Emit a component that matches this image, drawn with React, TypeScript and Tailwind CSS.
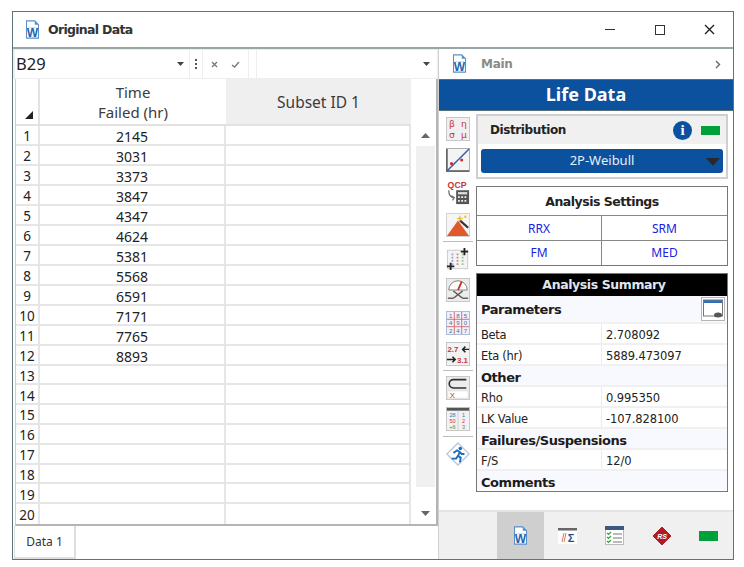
const failures = ["2145", "3031", "3373", "3847", "4347", "4624", "5381", "5568", "6591", "7171", "7765", "8893"];
const rows = Array.from({ length: 20 }, (_, i) => ({ n: i + 1, value: failures[i] ?? "" }));

const DocIcon = ({ size = 20 }: { size?: number }) => (
  <svg width={size} height={size * 1.27} viewBox="0 0 20 25">
    <path d="M2 1h11l5 5v18H2z" fill="#ffffff" stroke="#5b8fc7" strokeWidth="1.4" />
    <path d="M13 1v5h5z" fill="#5b8fc7" />
    <rect x="4" y="9" width="12" height="2" fill="#d5e3f2" />
    <text x="10" y="23" textAnchor="middle" fontSize="16" fontWeight="700" fill="#1f66b0" fontFamily="Liberation Sans, sans-serif">W</text>
  </svg>
);

const IconFrame = ({ children }: { children: React.ReactNode }) => (
  <svg width="24" height="24" viewBox="0 0 26 26" className="block">{children}</svg>
);

const BetaIcon = () => (
  <IconFrame>
    <rect x="0.500" y="0.500" width="25" height="25" fill="#f0f0f0" stroke="#c4c4c4" />
    <g fill="#c8373b" fontSize="10" fontFamily="DejaVu Sans, sans-serif" textAnchor="middle">
      <text x="6.500" y="11">β</text>
      <text x="19.500" y="11">η</text>
      <text x="6.500" y="23">σ</text>
      <text x="19.500" y="23">μ</text>
    </g>
  </IconFrame>
);

const PlotIcon = () => (
  <IconFrame>
    <rect x="0.500" y="0.500" width="25" height="25" fill="#f4f4f4" stroke="#a8a8a8" />
    <path d="M1 1v24h24" fill="none" stroke="#555" strokeWidth="1.6" />
    <path d="M1 25 25 1" stroke="#2f62ad" strokeWidth="1.6" />
    <circle cx="6" cy="17" r="1.700" fill="#d62b2b" />
    <circle cx="17" cy="13" r="1.700" fill="#d62b2b" />
  </IconFrame>
);

const QcpIcon = () => (
  <svg width="24" height="24" viewBox="0 0 26 26" className="block">
    <text x="12" y="8" textAnchor="middle" fontSize="9.500" fontWeight="700" fill="#c8373b" fontFamily="Liberation Sans, sans-serif">QCP</text>
    <path d="M3 10c0 5 2 8 6 8M6 16l3 2-2 3" fill="none" stroke="#5c6b75" strokeWidth="1.300" />
    <rect x="11" y="10" width="14" height="15" fill="#555" />
    <rect x="13" y="12" width="10" height="2.500" fill="#ddd" />
    <path d="M13 16.500h2v2h-2zM16.500 16.500h2v2h-2zM20 16.500h2v2h-2zM13 20.500h2v2h-2zM16.500 20.500h2v2h-2zM20 20.500h2v2h-2z" fill="#eee" />
  </svg>
);

const MountainIcon = () => (
  <IconFrame>
    <rect x="0.500" y="0.500" width="25" height="25" fill="#f5f5f5" stroke="#d0d0d0" />
    <path d="M1 25 13 8l12 17z" fill="#e0592a" />
    <path d="M15 8l9 8" stroke="#333" strokeWidth="2.400" />
    <path d="M15 2l1 3 3 1-3 1-1 3-1-3-3-1 3-1z" fill="#f2c230" />
    <circle cx="21" cy="4" r="1.300" fill="#f2c230" />
  </IconFrame>
);

const GridIcon = () => (
  <IconFrame>
    <rect x="1.500" y="3.500" width="22" height="20" fill="#f4f4f4" stroke="#c9c9c9" />
    <g stroke="#8aa8d6" strokeWidth="2" strokeDasharray="2 1.500">
      <path d="M7 7v14" />
      <path d="M12.500 7v14" stroke="#d08a8a" />
      <path d="M18 7v14" stroke="#9ac49a" />
    </g>
    <path d="M21 1v3h3v2h-3v3h-2V6h-3V4h3V1zM6 17v3h3v2H6v3H4v-3H1v-2h3v-3z" fill="#222" />
  </IconFrame>
);

const GaugeIcon = () => (
  <IconFrame>
    <rect x="0.500" y="0.500" width="25" height="25" fill="#ececec" stroke="#c4c4c4" />
    <path d="M3 13a10 10 0 0 1 20 0z" fill="#fff" stroke="#777" strokeWidth="1" />
    <path d="M13 13l4-9" stroke="#d22" strokeWidth="2" />
    <path d="M8 14l10 8M18 14 8 22" stroke="#555" strokeWidth="1.500" />
    <path d="M2 22h6M18 22h6" stroke="#666" strokeWidth="1.500" />
  </IconFrame>
);

const SudokuIcon = () => (
  <IconFrame>
    <rect x="0.500" y="0.500" width="25" height="25" fill="#eef1f8" stroke="#a9b8d6" />
    <path d="M9 1v24M17 1v24M1 9h24M1 17h24" stroke="#d26a6a" strokeWidth="1" />
    <g fontSize="6.500" textAnchor="middle" fill="#3c6cb4" fontFamily="Liberation Sans, sans-serif">
      <text x="5" y="7.500">1</text><text x="13" y="7.500">8</text><text x="21" y="7.500">5</text>
      <text x="5" y="15.500">4</text><text x="13" y="15.500">9</text><text x="21" y="15.500">0</text>
      <text x="5" y="23.500">2</text><text x="13" y="23.500">4</text><text x="21" y="23.500">7</text>
    </g>
  </IconFrame>
);

const ConvertIcon = () => (
  <IconFrame>
    <rect x="0.500" y="0.500" width="25" height="25" fill="#f2f2f2" stroke="#c4c4c4" />
    <text x="1.500" y="11" fontSize="8.500" fontWeight="700" fill="#c8373b" fontFamily="Liberation Sans, sans-serif">2.7</text>
    <text x="12" y="23" fontSize="8.500" fontWeight="700" fill="#c8373b" fontFamily="Liberation Sans, sans-serif">3.1</text>
    <path d="M25 8h-6M21 5l-3 3 3 3M1 19h8M7 16l3 3-3 3" fill="none" stroke="#222" strokeWidth="1.600" />
  </IconFrame>
);

const SubsetIcon = () => (
  <IconFrame>
    <rect x="0.500" y="0.500" width="25" height="25" fill="#ececec" stroke="#c4c4c4" />
    <path d="M22 4H8a4.500 4.500 0 0 0 0 9h14" fill="none" stroke="#333" strokeWidth="1.800" />
    <rect x="2" y="16" width="22" height="8" fill="#fff" stroke="#ddd" />
    <text x="7" y="23.500" textAnchor="middle" fontSize="8.500" fill="#c8373b" fontFamily="Liberation Sans, sans-serif">X</text>
  </IconFrame>
);

const TableIcon = () => (
  <IconFrame>
    <rect x="0.500" y="0.500" width="25" height="25" fill="#f2f2f2" stroke="#c4c4c4" />
    <rect x="1" y="1" width="24" height="3" fill="#555" />
    <path d="M13 4v21" stroke="#ccc" />
    <g fontSize="6" textAnchor="middle" fontFamily="Liberation Sans, sans-serif">
      <text x="7" y="10.500" fill="#3c6cb4">28</text><text x="19" y="10.500" fill="#3c6cb4">1</text>
      <text x="7" y="17" fill="#c8373b">50</text><text x="19" y="17" fill="#c8373b">2</text>
      <text x="7" y="23.500" fill="#3f9a4a">+6</text><text x="19" y="23.500" fill="#3f9a4a">3</text>
    </g>
  </IconFrame>
);

const RunIcon = () => (
  <IconFrame>
    <path d="M13 1 25 13 13 25 1 13z" fill="#ffffff" stroke="#b6c9de" strokeWidth="1.500" />
    <circle cx="15.500" cy="7" r="1.900" fill="#1b6bb8" />
    <path d="M8 12l4-3 3 2-2 4 3 2-1 5M13 15l-2 3-5 0M15 11l2 2 3 0" fill="none" stroke="#1b6bb8" strokeWidth="2" />
  </IconFrame>
);

const Divider = ({ className }: { className: string }) => <div className={`w-[30px] h-px bg-[#bdbdbd] ${className}`} />;

const SummaryRow = ({ label, value }: { label: string; value: string }) => (
  <div className="flex h-[21px] shrink-0 items-stretch border-b-2 border-[#f0f0f0] text-[11.500px] tracking-[-0.3px] text-[#222]">
    <div className="w-[125px] flex items-center pl-[4px] pt-[5px] border-r border-[#ececec]">{label}</div>
    <div className="flex-1 flex items-center pl-[4px] pt-[5px] tracking-[-0.1px]">{value}</div>
  </div>
);

const SectionRow = ({ label, last }: { label: string; last?: boolean }) => (
  <div className={`flex items-center pl-[4px] pt-[4px] bg-[#f8f8ff] text-[13px] font-bold tracking-[-0.45px] text-[#1c1c1c] ${last ? "h-[19px] shrink-0" : "h-[21px] shrink-0 border-b-2 border-[#f0f0f0]"}`}>{label}</div>
);

export default function App() {
  return (
    <div className="w-[744px] h-[567px] bg-white pt-[11px] pl-[12px] overflow-hidden font-['Noto_Sans',sans-serif]">
      <div className="w-[722px] h-[549px] border border-[#5d7478] flex flex-col bg-white">
        {/* title bar */}
        <div className="h-[37px] shrink-0 flex items-center border-b-2 border-[#9aa5a8]">
          <div className="ml-[12px] mr-[8px] flex"><DocIcon size={15} /></div>
          <span className="pt-[2px] text-[12.500px] font-bold text-[#333] font-['DejaVu_Sans',sans-serif] tracking-[-0.7px]">Original Data</span>
          <div className="ml-auto flex items-center">
            <div className="w-[10px] h-[1.500px] bg-[#333] mr-[40px]" />
            <div className="w-[10px] h-[10px] border border-[#333] mr-[39px]" />
            <svg width="11" height="11" viewBox="0 0 11 11" className="mr-[18px]"><path d="M1 1l9 9M10 1 1 10" stroke="#222" strokeWidth="1.400" /></svg>
          </div>
        </div>

        <div className="flex flex-1 min-h-0">
          {/* data sheet */}
          <div className="w-[425px] shrink-0 flex flex-col">
            <div className="h-[30px] shrink-0 flex items-center pl-[2px] pr-px gap-px bg-[#eeeeee]">
              <div className="w-[174px] h-[28px] bg-white flex items-center pl-px pr-[5px] text-[16.500px] text-[#222]">
                B29
                <svg width="7" height="4" viewBox="0 0 7 4" className="ml-auto"><path d="M0 0h7L3.500 4z" fill="#444" /></svg>
              </div>
              <div className="w-[12px] h-[28px] bg-white flex flex-col items-center justify-center gap-[2px]">
                <div className="w-[2px] h-[2px] bg-[#555]" />
                <div className="w-[2px] h-[2px] bg-[#555]" />
                <div className="w-[2px] h-[2px] bg-[#555]" />
              </div>
              <div className="w-[45px] h-[28px] bg-white flex items-center justify-center gap-[13px]">
                <svg width="7" height="7" viewBox="0 0 7 7"><path d="M1 1l5 5M6 1 1 6" stroke="#777" strokeWidth="1.300" /></svg>
                <svg width="9" height="7" viewBox="0 0 9 7"><path d="M1 4l2.500 2L8 1" fill="none" stroke="#777" strokeWidth="1.300" /></svg>
              </div>
              <div className="w-[7px] h-[28px] bg-white" />
              <div className="flex-1 h-[28px] bg-white flex items-center justify-end pr-[7px]">
                <svg width="7" height="4" viewBox="0 0 7 4"><path d="M0 0h7L3.500 4z" fill="#444" /></svg>
              </div>
            </div>

            <div className="ml-[2px] h-[447px] shrink-0 flex border-r-2 border-b-2 border-[#b5b5b5] border-l border-l-[#cfcfcf]">
              <div className="flex-1 flex flex-col">
                <div className="h-[47px] flex border-b-2 border-[#e2e2e2]">
                  <div className="w-[24px] border-r-2 border-[#e2e2e2] flex items-end justify-end pr-[5px] pb-[5px]">
                    <svg width="8" height="8" viewBox="0 0 8 8"><path d="M8 0v8H0z" fill="#222" /></svg>
                  </div>
                  <div className="w-[186px] pt-[2px] flex flex-col items-center justify-center text-[15px] leading-[20px] text-[#3c3c3c]">
                    <span>Time</span>
                    <span>Failed (hr)</span>
                  </div>
                  <div className="flex-1 pt-[3px] bg-[#efefef] flex items-center justify-center text-[15.500px] text-[#3c3c3c]">Subset ID 1</div>
                </div>
                {rows.map((row) => (
                  <div key={row.n} className="h-[20px] flex border-b-2 border-[#e6e6e6] text-[14px] leading-none text-[#222] last:border-b-0">
                    <div className="w-[24px] pt-[4px] border-r-2 border-[#e6e6e6] flex items-center justify-center text-[13.500px]">{row.n}</div>
                    <div className="w-[186px] pt-[4px] border-r-2 border-[#e6e6e6] flex items-center justify-center">{row.value}</div>
                    <div className="flex-1 border-r-2 border-[#e6e6e6]" />
                  </div>
                ))}
              </div>
              {/* scrollbar */}
              <div className="w-[25px] shrink-0 flex flex-col items-center pt-[54px] pl-[5px] pr-px">
                <svg width="9" height="5" viewBox="0 0 9 5"><path d="M0 5h9L4.500 0z" fill="#666" /></svg>
                <div className="w-[19px] h-[341px] mt-[8px] bg-[#f0f0f0]" />
                <svg width="9" height="5" viewBox="0 0 9 5" className="mt-[24px]"><path d="M0 0h9L4.500 5z" fill="#666" /></svg>
              </div>
            </div>

            <div className="flex-1 flex">
              <div className="w-[62px] border-r-2 border-b-2 border-[#dedede] border-l border-l-[#dedede] ml-px flex items-center justify-center text-[12px] text-[#333]">Data 1</div>
            </div>
          </div>

          {/* right side */}
          <div className="flex-1 flex flex-col border-l border-[#d0d0d0] min-w-0">
            <div className="h-[30px] shrink-0 flex items-center bg-white">
              <div className="ml-[13px] mr-[14px] flex"><DocIcon size={15} /></div>
              <span className="text-[12px] font-bold text-[#8a8a8a] font-['DejaVu_Sans',sans-serif] tracking-[-0.3px]">Main</span>
              <svg width="6" height="9" viewBox="0 0 6 9" className="ml-auto mr-[12px]"><path d="M1 1l3.500 3.500L1 8" fill="none" stroke="#666" strokeWidth="1.400" /></svg>
            </div>
            <div className="h-[32px] shrink-0 bg-[#0c519e] border-y border-[#56707a] pb-[2px] flex items-center justify-center text-[18px] font-bold text-white">Life Data</div>

            <div className="flex flex-1 min-h-0">
              <div className="w-[37px] shrink-0 flex flex-col items-center pt-[6px]">
                <BetaIcon />
                <div className="mt-[7px]"><PlotIcon /></div>
                <div className="mt-[9px]"><QcpIcon /></div>
                <div className="mt-[8px]"><MountainIcon /></div>
                <Divider className="mt-[4px]" />
                <div className="mt-[5px]"><GridIcon /></div>
                <div className="mt-[7px]"><GaugeIcon /></div>
                <div className="mt-[9px]"><SudokuIcon /></div>
                <div className="mt-[7px]"><ConvertIcon /></div>
                <Divider className="mt-[4px]" />
                <div className="mt-[5px]"><SubsetIcon /></div>
                <div className="mt-[7px]"><TableIcon /></div>
                <Divider className="mt-[5px]" />
                <div className="mt-[5px]"><RunIcon /></div>
              </div>

              <div className="w-[252px] shrink-0 pt-[3px] flex flex-col">
                <div className="h-[65px] shrink-0 border-2 border-[#cfcfcf] flex flex-col">
                  <div className="h-[28px] shrink-0 bg-[#f0f0f0] flex items-center pl-[12px] pr-[6px] text-[12px] font-bold text-[#222] font-['DejaVu_Sans',sans-serif] tracking-[-0.4px]">
                    Distribution
                    <span className="ml-auto w-[19px] h-[19px] rounded-full bg-[#0c519e] flex items-center justify-center text-white text-[15px] font-bold font-['Liberation_Serif',serif] mr-[9px]">i</span>
                    <span className="w-[19px] h-[9px] bg-[#00a13a]" />
                  </div>
                  <div className="flex-1 bg-white flex items-center px-[3px]">
                    <div className="flex-1 h-[24px] rounded-[3px] bg-[#0c519e] flex items-center justify-center text-[13px] text-[#e6eef8] relative">
                      2P-Weibull
                      <svg width="14" height="8" viewBox="0 0 14 8" className="absolute right-[3px] top-[9px]"><path d="M0 0h14L7 8z" fill="#26292e" /></svg>
                    </div>
                  </div>
                </div>

                <div className="mt-[7px] h-[80px] shrink-0 border border-[#777] flex flex-col text-[12px] text-[#2020e0]">
                  <div className="h-[29px] flex items-center justify-center pt-[3px] text-[12.500px] font-bold text-[#222] border-b border-[#888] font-['DejaVu_Sans',sans-serif] tracking-[-0.5px]">Analysis Settings</div>
                  <div className="h-[25px] flex border-b border-[#888]">
                    <div className="w-[125px] pt-[2px] border-r border-[#888] flex items-center justify-center">RRX</div>
                    <div className="flex-1 pt-[2px] flex items-center justify-center">SRM</div>
                  </div>
                  <div className="flex-1 flex">
                    <div className="w-[125px] border-r border-[#888] flex items-center justify-center">FM</div>
                    <div className="flex-1 flex items-center justify-center">MED</div>
                  </div>
                </div>

                <div className="mt-[7px] h-[219px] shrink-0 border border-[#777] flex flex-col font-['DejaVu_Sans',sans-serif]">
                  <div className="h-[22px] shrink-0 bg-black pl-[4px] pt-[1px] flex items-center justify-center text-[12.500px] font-bold tracking-[-0.4px] text-[#dfe6f2]">Analysis Summary</div>
                  <div className="h-[28px] shrink-0 flex items-center pl-[4px] pr-[2px] bg-[#f8f8ff] border-b-2 border-[#f0f0f0] text-[13px] font-bold tracking-[-0.45px] text-[#1c1c1c]">
                    <span className="pt-[2px]">Parameters</span>
                    <svg width="24" height="24" viewBox="0 0 24 24" className="ml-auto">
                      <rect x="0.500" y="0.500" width="23" height="23" fill="#ffffff" stroke="#b5b5b5" />
                      <rect x="2" y="3" width="20" height="3" fill="#2f6fc0" />
                      <rect x="2.500" y="3" width="19" height="16" fill="none" stroke="#777" />
                      <ellipse cx="17" cy="18" rx="4" ry="2.500" fill="#555" />
                    </svg>
                  </div>
                  <SummaryRow label="Beta" value="2.708092" />
                  <SummaryRow label="Eta (hr)" value="5889.473097" />
                  <SectionRow label="Other" />
                  <SummaryRow label="Rho" value="0.995350" />
                  <SummaryRow label="LK Value" value="-107.828100" />
                  <SectionRow label="Failures/Suspensions" />
                  <SummaryRow label="F/S" value="12/0" />
                  <SectionRow label="Comments" last />
                </div>
              </div>
            </div>

            <div className="h-[49px] shrink-0 bg-[#f0f0f0] border-t-2 border-[#e4e4e4] flex items-stretch pl-[58px]">
              <div className="w-[47px] bg-[#cfcfcf] flex items-center justify-center"><DocIcon size={15} /></div>
              <div className="w-[47px] flex items-center justify-center">
                <svg width="19" height="16" viewBox="0 0 19 16">
                  <rect width="19" height="16" fill="#fff" />
                  <rect width="19" height="2.500" fill="#666" />
                  <path d="M6 5 4 14M8 5 6 14" stroke="#e0765a" strokeWidth="1" />
                  <text x="13" y="14" textAnchor="middle" fontSize="11" fontWeight="700" fill="#1f4f8f" fontFamily="Liberation Sans, sans-serif">Σ</text>
                </svg>
              </div>
              <div className="w-[47px] flex items-center justify-center">
                <svg width="19" height="19" viewBox="0 0 19 19">
                  <rect x="0.500" y="2" width="18" height="16.500" fill="#fff" stroke="#bbb" />
                  <rect width="19" height="4" fill="#3c5a80" />
                  <path d="M2 7l1.500 1.500L6 6M2 11l1.500 1.500L6 10M2 15l1.500 1.500L6 14" fill="none" stroke="#3f9a4a" strokeWidth="1.200" />
                  <path d="M8 8h9M8 12h9M8 16h9" stroke="#777" />
                </svg>
              </div>
              <div className="w-[48px] flex items-center justify-center">
                <svg width="20" height="20" viewBox="0 0 20 20">
                  <path d="M10 1 19 10 10 19 1 10z" fill="#b01c24" stroke="#b01c24" strokeWidth="1" strokeLinejoin="round" />
                  <text x="10" y="12.500" textAnchor="middle" fontSize="7" fontWeight="700" fontStyle="italic" fill="#fff" fontFamily="Liberation Sans, sans-serif">RS</text>
                </svg>
              </div>
              <div className="w-[45px] flex items-center justify-center"><span className="w-[19px] h-[10px] bg-[#00a13a]" /></div>
            </div>
          </div>
        </div>
      </div>
    </div>
  );
}
